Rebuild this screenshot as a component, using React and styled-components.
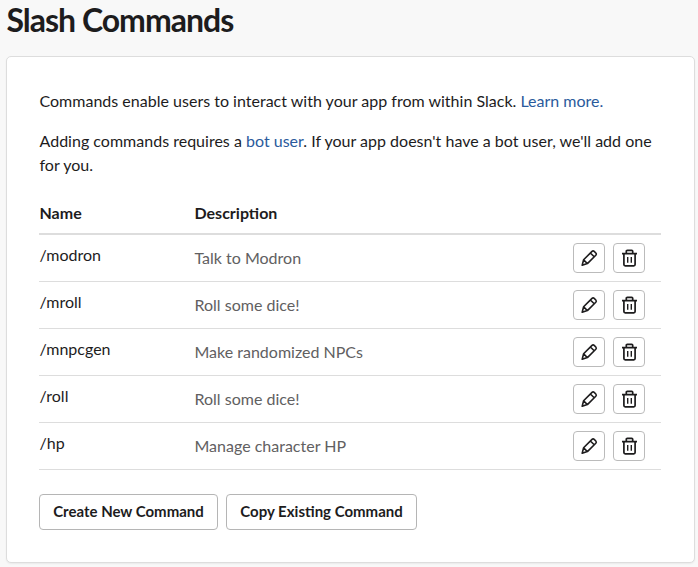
import React from 'react';
import styled, { createGlobalStyle } from 'styled-components';

const Global = createGlobalStyle`
  * { box-sizing: border-box; }
  body { margin: 0; background: #f8f8f8; font-family: Lato, sans-serif; color: #1d1c1d; overflow: hidden; }
`;
const Page = styled.main`height: 567px; padding: 0 3px 0 6px;`;
const Title = styled.h1`margin: 0; height: 56px; font-size: 32px; line-height: 40px; font-weight: 700; letter-spacing: -1px; padding-left: 0.5px;`;
const Card = styled.section`height: 507px; padding: 32px 33px 0 32px; background: #fff; border: 1px solid #ddd; border-radius: 5px; box-shadow: 0 1px 2px rgba(0, 0, 0, 0.06);`;
const Text = styled.p`margin: 0 0 16px; padding-left: 0.5px; font-size: 16px; line-height: 24px; letter-spacing: 0.01px; white-space: nowrap;`;
const Link = styled.a`color: #2a5a9c; text-decoration: none;`;
const Row = styled.div`display: grid; grid-template-columns: 155px 1fr auto; height: 47px; border-bottom: 1px solid #ddd; font-size: 16px; line-height: 24px;`;
const Head = styled(Row)`height: 34px; margin-top: 24px; border-bottom: 2px solid #ddd; font-weight: 700;`;
const HeadCell = styled.div`padding-left: 0.5px;`;
const Name = styled.div`padding: 8px 0 0 0.5px;`;
const Description = styled.div`padding: 11px 0 0 0.5px; color: #616061;`;
const Actions = styled.div`display: flex; gap: 8px; padding: 8px 16px 0 0;`;
const IconButton = styled.button`display: flex; align-items: center; justify-content: center; width: 32px; height: 30px; padding: 0; background: #fff; border: 1px solid #bbb; border-radius: 4px; color: #1d1c1d;`;
const Footer = styled.div`display: flex; gap: 8px; margin-top: 24px;`;
const Button = styled.button`width: ${p => p.$width}px; height: 36px; padding: 0 0 2px; border: 1px solid #b5b5b5; border-radius: 4px; background: #fff; color: #1d1c1d; font: 700 15px Lato, sans-serif; white-space: nowrap;`;

const Pencil = () => (
  <svg width="18" height="18" viewBox="0 0 18 18" fill="none" stroke="currentColor" strokeWidth="1.6" strokeLinejoin="round">
    <path d="M2.2 16.2l1.4-5.4L12 2.4q1.1-1 2.2 0l1.6 1.6q1 1.1 0 2.2L7.4 14.6z M10.4 4l3.8 3.8 M3.6 10.8l3.8 3.8" />
  </svg>
);
const Trash = () => (
  <svg width="18" height="18" viewBox="0 0 18 18" fill="none" stroke="currentColor" strokeWidth="1.7" strokeLinejoin="round">
    <path d="M2 4.6h15 M6.3 4.3V2.3q0-1 1-1h4.4q1 0 1 1v2 M3.9 4.6V15.6q0 1.3 1.3 1.3h8.6q1.3 0 1.3-1.3V4.6" />
    <path d="M7.7 8v5.8 M11.3 8v5.8" strokeWidth="1.4" />
  </svg>
);

const commands = [
  ['/modron', 'Talk to Modron'],
  ['/mroll', 'Roll some dice!'],
  ['/mnpcgen', 'Make randomized NPCs'],
  ['/roll', 'Roll some dice!'],
  ['/hp', 'Manage character HP'],
];

export default function App() {
  return (
    <Page>
      <Global />
      <Title>Slash Commands</Title>
      <Card>
        <Text>Commands enable users to interact with your app from within Slack. <Link>Learn more.</Link></Text>
        <Text>Adding commands requires a <Link>bot user</Link>. If your app doesn't have a bot user, we'll add one<br />for you.</Text>
        <Head><HeadCell>Name</HeadCell><HeadCell>Description</HeadCell></Head>
        {commands.map(([name, description]) => (
          <Row key={name}>
            <Name>{name}</Name>
            <Description>{description}</Description>
            <Actions>
              <IconButton aria-label="Edit"><Pencil /></IconButton>
              <IconButton aria-label="Delete"><Trash /></IconButton>
            </Actions>
          </Row>
        ))}
        <Footer>
          <Button $width={179}>Create New Command</Button>
          <Button $width={191}>Copy Existing Command</Button>
        </Footer>
      </Card>
    </Page>
  );
}
